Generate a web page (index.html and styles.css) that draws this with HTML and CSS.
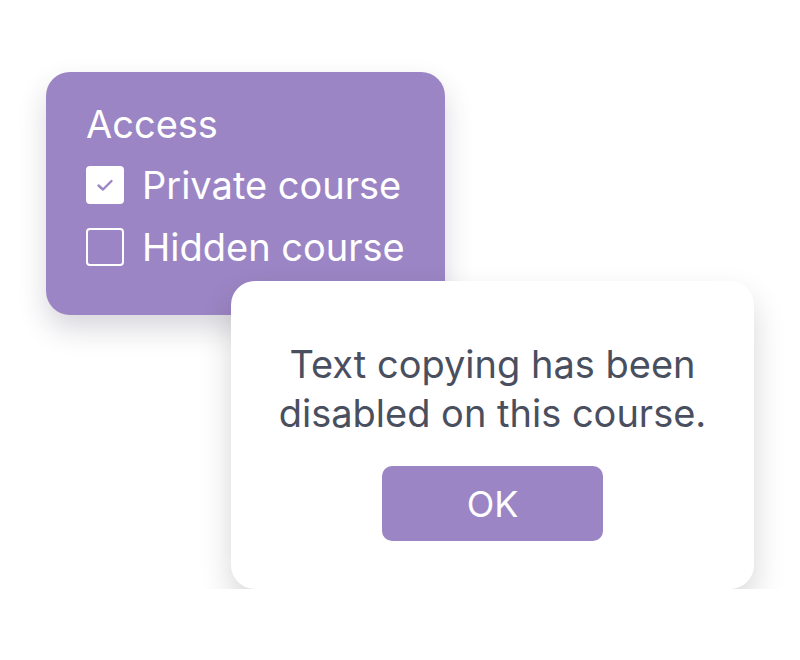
FILE: index.html
```html
<!DOCTYPE html>
<html lang="en">
<head>
  <meta charset="UTF-8">
  <title>Course access</title>
  <link rel="stylesheet" href="styles.css">
</head>
<body>
  <div class="scene">
    <div class="access-card">
      <h2 class="access-title">Access</h2>
      <div class="option">
        <span class="box checked">
          <svg width="20" height="16" viewBox="0 0 20 16"><path d="M3.5 8.5l4.5 4 8.5-8.5" fill="none" stroke="#9b85c4" stroke-width="2.4" stroke-linecap="round" stroke-linejoin="round"/></svg>
        </span>
        <span class="option-label">Private course</span>
      </div>
      <div class="option">
        <span class="box"></span>
        <span class="option-label">Hidden course</span>
      </div>
    </div>

    <div class="dialog">
      <p class="dialog-text">Text copying has been<br>disabled on this course.</p>
      <button class="ok-btn">OK</button>
    </div>
  </div>
</body>
</html>
```

FILE: styles.css
```css
body { margin: 0; background: #fff; font-family: Inter, "Noto Sans", sans-serif; }
.scene { padding: 72px 0 0 46px; }

.access-card { width: 399px; height: 243px; box-sizing: border-box; padding: 27px 0 0 40px; background: #9b85c4; border-radius: 24px; box-shadow: 0 14px 28px rgba(60, 50, 80, 0.2); color: #fff; }
.access-title { margin: 0 0 5px; font-size: 38px; font-weight: 400; line-height: 50px; }
.option { display: flex; align-items: center; gap: 18px; height: 62px; }
.box { width: 38px; height: 38px; box-sizing: border-box; border: 2px solid #fff; border-radius: 4px; display: flex; align-items: center; justify-content: center; }
.box.checked { background: #fff; }
.option-label { font-size: 38px; line-height: 40px; }

.dialog { position: relative; width: 523px; height: 308px; box-sizing: border-box; margin: -34px 0 0 185px; padding-top: 59px; background: #fff; border-radius: 24px; box-shadow: 0 16px 32px rgba(0, 0, 0, 0.16); text-align: center; }
.dialog-text { margin: 0; font-size: 38px; font-weight: 400; line-height: 49px; color: #4a4f60; }
.ok-btn { margin-top: 28px; width: 221px; height: 75px; border: none; border-radius: 10px; background: #9b85c4; color: #fff; font-family: inherit; font-size: 36px; }
```
